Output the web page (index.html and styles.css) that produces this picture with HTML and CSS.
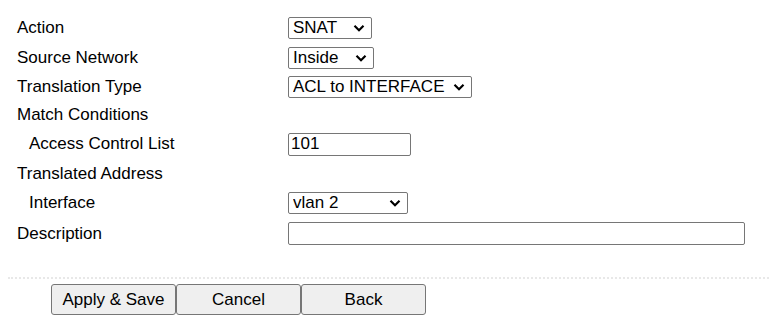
FILE: index.html
```html
<!DOCTYPE html>
<html lang="en">
<head>
    <meta charset="UTF-8">
    <title>NAT Rule</title>
    <link rel="stylesheet" href="styles.css">
</head>
<body>
    <div class="form">
        <div class="row">
            <label class="label">Action</label>
            <select class="w-snat"><option>SNAT</option><option>DNAT</option></select>
        </div>
        <div class="row">
            <label class="label">Source Network</label>
            <select class="w-inside"><option>Inside</option><option>Outside</option></select>
        </div>
        <div class="row row-short">
            <label class="label">Translation Type</label>
            <select class="w-type"><option>ACL to INTERFACE</option><option>ACL to POOL</option></select>
        </div>
        <div class="row row-short">
            <span class="label">Match Conditions</span>
        </div>
        <div class="row">
            <label class="label sub">Access Control List</label>
            <input type="text" class="w-acl" value="101">
        </div>
        <div class="row row-mid">
            <span class="label">Translated Address</span>
        </div>
        <div class="row">
            <label class="label sub">Interface</label>
            <select class="w-iface"><option>vlan 2</option><option>vlan 1</option></select>
        </div>
        <div class="row row-tall">
            <label class="label">Description</label>
            <input type="text" class="w-desc" value="">
        </div>
    </div>

    <div class="divider"></div>

    <div class="actions">
        <button>Apply &amp; Save</button>
        <button>Cancel</button>
        <button>Back</button>
    </div>
</body>
</html>
```

FILE: styles.css
```css
body {
    margin: 8px;
    font-family: "Liberation Sans", Arial, sans-serif;
    font-size: 17px;
    color: #000;
    background: #fff;
}
.form {
    padding: 5px 0 0 9px;
}
.row {
    display: flex;
    align-items: center;
    height: 30px;
}
.row-short {
    height: 28px;
}
.row-mid {
    height: 29px;
}
.row-tall {
    height: 31px;
}
.label {
    width: 271px;
    flex-shrink: 0;
}
.sub {
    padding-left: 12px;
    box-sizing: border-box;
}
select, input {
    font-family: inherit;
    font-size: 17px;
    color: #000;
    box-sizing: border-box;
    margin: 0;
    border: 1px solid #767676;
    border-radius: 2px;
    background-color: #fff;
}
select {
    -webkit-appearance: none;
    appearance: none;
    height: 22px;
    padding: 0 20px 0 4px;
    line-height: 20px;
    background-image: url("data:image/svg+xml,%3Csvg xmlns='http://www.w3.org/2000/svg' width='12' height='8' viewBox='0 0 12 8'%3E%3Cpath d='M1.5 1.8 L6 6.2 L10.5 1.8' fill='none' stroke='%23000' stroke-width='2.2'/%3E%3C/svg%3E");
    background-repeat: no-repeat;
    background-position: right 6px center;
    background-size: 12px 8px;
}
input {
    height: 23px;
    padding: 1px 2px;
}
.w-snat { width: 84px; }
.w-inside { width: 86px; }
.w-type { width: 184px; }
.w-acl { width: 123px; }
.w-iface { width: 120px; }
.w-desc { width: 457px; }

.divider {
    margin: 28px -8px 0 0;
    border-top: 2px dotted #e8e8e8;
}
.actions {
    display: flex;
    padding: 5px 0 0 43px;
}
.actions button {
    width: 125px;
    height: 31px;
    margin: 0;
    font-family: inherit;
    font-size: 17px;
    color: #000;
    background: #efefef;
    border: 1px solid #767676;
    border-radius: 3px;
}
```
